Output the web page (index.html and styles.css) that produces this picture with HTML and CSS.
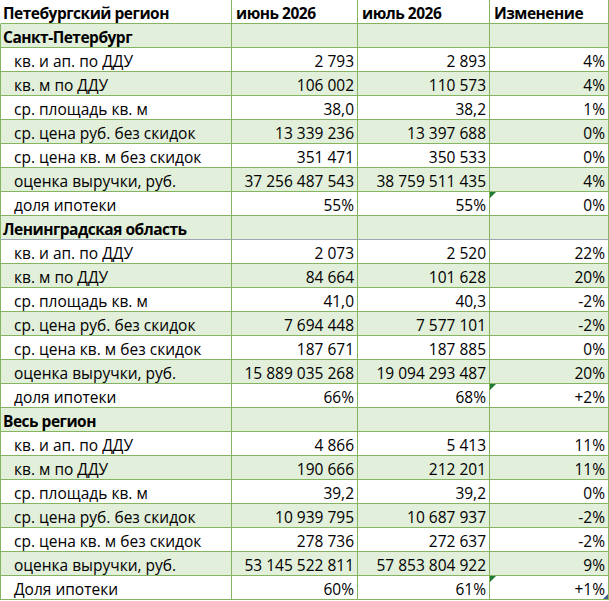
FILE: index.html
```html
<!DOCTYPE html>
<html lang="ru">
<head>
<meta charset="utf-8">
<title>Петебургский регион</title>
<link rel="stylesheet" href="styles.css">
</head>
<body>
<div class="sheet">
  <div class="row head"><div class="c c1">Петебургский регион</div><div class="c">июнь 2026</div><div class="c">июль 2026</div><div class="c">Изменение</div></div>

  <div class="row sec"><div class="c c1">Санкт-Петербург</div><div class="c"></div><div class="c"></div><div class="c"></div></div>
  <div class="row"><div class="c c1 ind">кв. и ап. по ДДУ</div><div class="c n">2 793</div><div class="c n">2 893</div><div class="c n">4%</div></div>
  <div class="row band"><div class="c c1 ind">кв. м по ДДУ</div><div class="c n">106 002</div><div class="c n">110 573</div><div class="c n">4%</div></div>
  <div class="row"><div class="c c1 ind">ср. площадь кв. м</div><div class="c n">38,0</div><div class="c n">38,2</div><div class="c n">1%</div></div>
  <div class="row band"><div class="c c1 ind">ср. цена руб. без скидок</div><div class="c n">13 339 236</div><div class="c n">13 397 688</div><div class="c n">0%</div></div>
  <div class="row"><div class="c c1 ind">ср. цена кв. м без скидок</div><div class="c n">351 471</div><div class="c n">350 533</div><div class="c n">0%</div></div>
  <div class="row band"><div class="c c1 ind">оценка выручки, руб.</div><div class="c n">37 256 487 543</div><div class="c n">38 759 511 435</div><div class="c n">4%</div></div>
  <div class="row"><div class="c c1 ind">доля ипотеки</div><div class="c n">55%</div><div class="c n">55%</div><div class="c n mark">0%</div></div>

  <div class="row sec gray"><div class="c c1">Ленинградская область</div><div class="c"></div><div class="c"></div><div class="c"></div></div>
  <div class="row"><div class="c c1 ind">кв. и ап. по ДДУ</div><div class="c n">2 073</div><div class="c n">2 520</div><div class="c n">22%</div></div>
  <div class="row band"><div class="c c1 ind">кв. м по ДДУ</div><div class="c n">84 664</div><div class="c n">101 628</div><div class="c n">20%</div></div>
  <div class="row"><div class="c c1 ind">ср. площадь кв. м</div><div class="c n">41,0</div><div class="c n">40,3</div><div class="c n">-2%</div></div>
  <div class="row band"><div class="c c1 ind">ср. цена руб. без скидок</div><div class="c n">7 694 448</div><div class="c n">7 577 101</div><div class="c n">-2%</div></div>
  <div class="row"><div class="c c1 ind">ср. цена кв. м без скидок</div><div class="c n">187 671</div><div class="c n">187 885</div><div class="c n">0%</div></div>
  <div class="row band"><div class="c c1 ind">оценка выручки, руб.</div><div class="c n">15 889 035 268</div><div class="c n">19 094 293 487</div><div class="c n">20%</div></div>
  <div class="row"><div class="c c1 ind">доля ипотеки</div><div class="c n">66%</div><div class="c n">68%</div><div class="c n mark">+2%</div></div>

  <div class="row sec"><div class="c c1">Весь регион</div><div class="c"></div><div class="c"></div><div class="c"></div></div>
  <div class="row"><div class="c c1 ind">кв. и ап. по ДДУ</div><div class="c n">4 866</div><div class="c n">5 413</div><div class="c n">11%</div></div>
  <div class="row band"><div class="c c1 ind">кв. м по ДДУ</div><div class="c n">190 666</div><div class="c n">212 201</div><div class="c n">11%</div></div>
  <div class="row"><div class="c c1 ind">ср. площадь кв. м</div><div class="c n">39,2</div><div class="c n">39,2</div><div class="c n">0%</div></div>
  <div class="row band"><div class="c c1 ind">ср. цена руб. без скидок</div><div class="c n">10 939 795</div><div class="c n">10 687 937</div><div class="c n">-2%</div></div>
  <div class="row"><div class="c c1 ind">ср. цена кв. м без скидок</div><div class="c n">278 736</div><div class="c n">272 637</div><div class="c n">-2%</div></div>
  <div class="row band"><div class="c c1 ind">оценка выручки, руб.</div><div class="c n">53 145 522 811</div><div class="c n">57 853 804 922</div><div class="c n">9%</div></div>
  <div class="row last"><div class="c c1 ind">Доля ипотеки</div><div class="c n">60%</div><div class="c n">61%</div><div class="c n mark handle">+1%</div></div>
</div>
</body>
</html>
```

FILE: styles.css
```css
html, body {
  margin: 0;
  padding: 0;
  background: #ffffff;
}

.sheet {
  width: 609px;
  font-family: "Open Sans", "Liberation Sans", sans-serif;
  font-size: 15.5px;
  color: #000000;
}

.row {
  display: grid;
  grid-template-columns: 232px 126px 132px 119px;
  height: 24px;
}

.c {
  box-sizing: border-box;
  height: 24px;
  padding: 3px 4px 0 4px;
  line-height: 20px;
  white-space: nowrap;
  overflow: hidden;
  border-right: 1px solid #86b562;
  border-bottom: 1px solid #86b562;
}

.c1 {
  border-left: 1px solid #86b562;
  padding-left: 2px;
}

.head .c1 {
  border-left-color: transparent;
}

.head .c,
.sec .c {
  font-weight: 700;
  letter-spacing: -0.5px;
}

.ind {
  padding-left: 13px;
}

.n {
  text-align: right;
  padding-right: 3px;
}

.band .c,
.sec .c {
  background: #e2efda;
}

.gray .c {
  border-bottom-color: #9aa8b6;
}

.mark {
  position: relative;
}

.mark::before {
  content: "";
  position: absolute;
  left: 0;
  top: 0;
  width: 0;
  height: 0;
  border-top: 6px solid #1f7a36;
  border-right: 6px solid transparent;
}

.handle::after {
  content: "";
  position: absolute;
  right: 0;
  bottom: 0;
  width: 0;
  height: 0;
  border-bottom: 5px solid #3d5c8f;
  border-left: 5px solid transparent;
}
```
